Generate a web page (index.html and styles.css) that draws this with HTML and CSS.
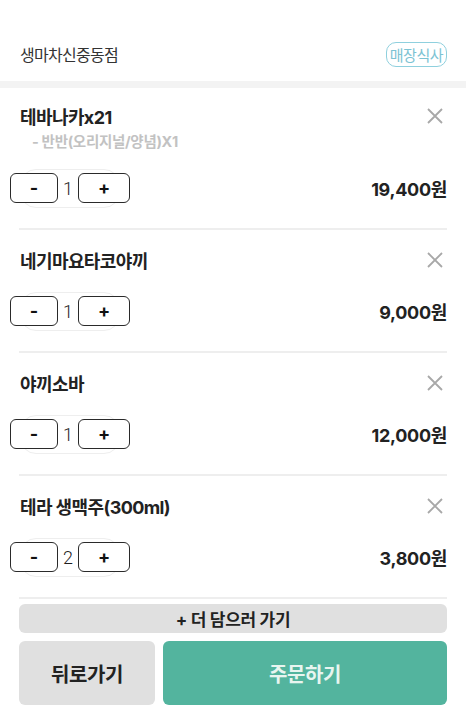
FILE: index.html
```html
<!DOCTYPE html>
<html lang="ko">
<head>
<meta charset="utf-8">
<title>장바구니</title>
<link rel="stylesheet" href="styles.css">
</head>
<body>
<div class="page">
  <header class="top">
    <span class="store">생마차신중동점</span>
    <span class="badge">매장식사</span>
  </header>
  <div class="band"></div>
  <ul class="items">
    <li class="item">
      <div class="item-head">
        <span class="name">테바나카x21</span>
        <button class="close" aria-label="삭제"><svg viewBox="0 0 16 16" width="16" height="16"><path d="M1 1L15 15M15 1L1 15" stroke="#a8a8a8" stroke-width="1.8" fill="none"/></svg></button>
      </div>
      <div class="opt">- 반반(오리지널/양념)X1</div>
      <div class="item-foot">
        <div class="stepper"><button class="step">-</button><span class="qty">1</span><button class="step plus">+</button></div>
        <span class="price">19,400원</span>
      </div>
    </li>
    <li class="item">
      <div class="item-head">
        <span class="name">네기마요타코야끼</span>
        <button class="close" aria-label="삭제"><svg viewBox="0 0 16 16" width="16" height="16"><path d="M1 1L15 15M15 1L1 15" stroke="#a8a8a8" stroke-width="1.8" fill="none"/></svg></button>
      </div>
      <div class="item-foot">
        <div class="stepper"><button class="step">-</button><span class="qty">1</span><button class="step plus">+</button></div>
        <span class="price">9,000원</span>
      </div>
    </li>
    <li class="item">
      <div class="item-head">
        <span class="name">야끼소바</span>
        <button class="close" aria-label="삭제"><svg viewBox="0 0 16 16" width="16" height="16"><path d="M1 1L15 15M15 1L1 15" stroke="#a8a8a8" stroke-width="1.8" fill="none"/></svg></button>
      </div>
      <div class="item-foot">
        <div class="stepper"><button class="step">-</button><span class="qty">1</span><button class="step plus">+</button></div>
        <span class="price">12,000원</span>
      </div>
    </li>
    <li class="item">
      <div class="item-head">
        <span class="name">테라 생맥주(300ml)</span>
        <button class="close" aria-label="삭제"><svg viewBox="0 0 16 16" width="16" height="16"><path d="M1 1L15 15M15 1L1 15" stroke="#a8a8a8" stroke-width="1.8" fill="none"/></svg></button>
      </div>
      <div class="item-foot">
        <div class="stepper"><button class="step">-</button><span class="qty">2</span><button class="step plus">+</button></div>
        <span class="price">3,800원</span>
      </div>
    </li>
  </ul>
  <div class="bottom">
    <button class="more">+ 더 담으러 가기</button>
    <div class="actions">
      <button class="back">뒤로가기</button>
      <button class="order">주문하기</button>
    </div>
  </div>
</div>
</body>
</html>
```

FILE: styles.css
```css
* { box-sizing: border-box; }
html, body { margin: 0; padding: 0; background: #fff; }
body {
  font-family: "Inter", "Noto Sans CJK KR", sans-serif;
  color: #222;
}
button { font-family: inherit; cursor: pointer; }

.page { width: 466px; }

.top {
  height: 81px;
  padding: 40px 19px 13px 20px;
  display: flex;
  align-items: center;
  justify-content: space-between;
}
.store {
  font-size: 16px;
  color: #333;
  letter-spacing: -0.7px;
}
.badge {
  font-size: 15px;
  color: #7cc3d3;
  border: 1.5px solid #8fd0de;
  border-radius: 10px;
  height: 25px;
  padding: 0 3px;
  display: flex;
  align-items: center;
  letter-spacing: -0.5px;
}

.band { height: 7px; background: #f3f3f3; }

.items {
  list-style: none;
  margin: 0;
  padding: 0 19px;
}
.item {
  padding: 16px 0 20px;
  border-bottom: 2px solid #eeeeee;
}
.item + .item { padding-top: 18px; }

.item-head {
  height: 24px;
  display: flex;
  align-items: center;
  justify-content: space-between;
  margin-bottom: 19px;
}
.item-head:has(+ .opt) { margin-bottom: 0; }
.name {
  font-size: 18px;
  font-weight: bold;
  color: #222;
  padding-left: 1px;
  letter-spacing: -0.6px;
}
.close {
  border: 0;
  background: none;
  padding: 0;
  width: 16px;
  height: 16px;
  margin-right: 4px;
  display: block;
}
.close svg { display: block; }

.opt {
  height: 22px;
  line-height: 22px;
  margin-top: 3px;
  font-size: 14.5px;
  font-weight: bold;
  color: #c2c2c2;
  padding-left: 13px;
  margin-bottom: 15px;
  letter-spacing: -0.3px;
}

.item-foot {
  height: 40px;
  display: flex;
  align-items: center;
  justify-content: space-between;
}
.stepper {
  width: 100px;
  height: 39px;
  margin-left: 1px;
  border: 1px solid #eeeeee;
  border-radius: 16px;
  display: flex;
  align-items: center;
  justify-content: center;
}
.step {
  flex: none;
  width: 48px;
  height: 30px;
  border: 1.5px solid #2a2a2a;
  border-radius: 6px;
  background: #fff;
  font-size: 18px;
  font-weight: bold;
  color: #111;
  padding: 0;
  line-height: 1;
}
.step.plus { width: 52px; }
.qty {
  flex: none;
  margin: 0 5px;
  font-family: Roboto, "Liberation Sans", sans-serif;
  font-weight: 300;
  font-size: 18px;
  color: #1e1e1e;
}
.price {
  font-size: 18px;
  font-weight: bold;
  color: #222;
  letter-spacing: -0.3px;
}

.bottom {
  padding: 5px 19px 0;
}
.more {
  display: block;
  width: 100%;
  height: 29px;
  border: 0;
  border-radius: 6px;
  background: #e0e0e0;
  font-size: 17px;
  font-weight: bold;
  color: #222;
  padding: 0;
  letter-spacing: -0.3px;
}
.actions {
  margin-top: 8px;
  display: grid;
  grid-template-columns: 136px 1fr;
  gap: 8px;
}
.actions button {
  height: 64px;
  border: 0;
  border-radius: 6px;
  font-size: 20px;
  font-weight: bold;
  padding: 0;
  letter-spacing: -0.4px;
}
.back { background: #e0e0e0; color: #222; }
.order { background: #53b49e; color: #e8f5f0; }
```
